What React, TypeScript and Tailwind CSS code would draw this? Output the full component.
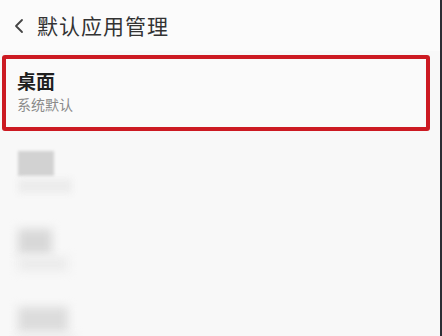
import React from "react";

const font = { fontFamily: '"Noto Sans CJK SC", "Noto Sans", sans-serif' };

function BlurredRow({ top, sub, w1, w2, soft }: { top: string; sub: string; w1: string; w2: string; soft?: boolean }) {
  return (
    <div className="flex h-[78px] shrink-0 flex-col gap-[3px] pl-[18px]">
      <div className={`h-[25px] ${w1} ${top} ${soft ? "blur-[5px]" : "blur-[1.5px]"}`} />
      <div className={`h-[14px] ${w2} ${sub} ${soft ? "blur-[5px]" : "blur-[3px]"}`} />
    </div>
  );
}

export default function App() {
  return (
    <div className="flex h-[336px] w-[442px] overflow-hidden bg-[#f8f8f8]" style={font}>
      <div className="flex min-h-0 flex-1 flex-col overflow-hidden">
        <div className="flex h-[51px] shrink-0 items-center gap-[12px] bg-[#fbfbfb] pl-[13px]">
          <svg width="12" height="16" viewBox="0 0 12 16" fill="none">
            <path d="M9 2 L3 8 L9 14" stroke="#444" strokeWidth="1.8" strokeLinecap="round" strokeLinejoin="round" />
          </svg>
          <span className="text-[21px] leading-none tracking-[1px] text-[#333]">默认应用管理</span>
        </div>
        <div className="ml-[2px] mr-[10px] mt-[4px] h-[76px] shrink-0 rounded-[3px] border-4 border-[#cc1a22] bg-[#fafafa] pl-[11px] pt-[11px]">
          <div className="text-[19px] font-bold leading-[22px] text-[#1f1f1f]">桌面</div>
          <div className="mt-[3px] text-[14px] leading-[18px] text-[#8a8a8a]">系统默认</div>
        </div>
        <div className="mt-[20px] flex shrink-0 flex-col">
          <BlurredRow top="bg-[#d2d2d2]" sub="bg-[#ececec]" w1="w-[36px]" w2="w-[54px]" />
          <BlurredRow top="bg-[#d8d8d8]" sub="bg-[#ebebeb]" w1="w-[34px]" w2="w-[50px]" soft />
          <BlurredRow top="bg-[#dcdcdc]" sub="bg-[#ececec]" w1="w-[50px]" w2="w-[56px]" soft />
        </div>
      </div>
      <div className="w-[2px] shrink-0 bg-[#2b2d34]" />
    </div>
  );
}
